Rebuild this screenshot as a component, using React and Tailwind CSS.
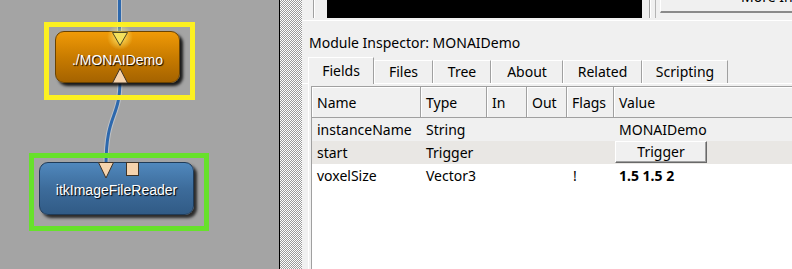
import React from "react";

function Canvas() {
  return (
    <div className="relative w-[279px] h-full shrink-0 bg-[#a4a4a4]">
      <svg className="absolute inset-0" width="279" height="269">
        <path d="M119.5 0 L119.5 36" stroke="#c9ced6" strokeOpacity="0.7" strokeWidth="5" fill="none" />
        <path d="M119.5 0 L119.5 36" stroke="#2d68ad" strokeWidth="3" fill="none" />
        <path d="M120 80 C120 120 106 112 106 166" stroke="#c9ced6" strokeOpacity="0.7" strokeWidth="5" fill="none" />
        <path d="M120 80 C120 120 106 112 106 166" stroke="#2d68ad" strokeWidth="3" fill="none" />
      </svg>

      <div className="absolute left-[44px] top-[22px] w-[151px] h-[78px] border-[5px] border-[#fcf021]" />
      <div className="absolute left-[55px] top-[31px] w-[125px] h-[52px] rounded-[9px] border border-[#6b4300] bg-linear-to-b from-[#f09a08] via-[#c97c00] to-[#a56300] shadow-[3px_3px_3px_rgba(0,0,0,0.85)] flex items-center justify-center pt-[6px] text-white font-['Liberation_Sans',Arial,sans-serif] text-[14px] [text-shadow:1px_1px_1px_#000]">
        ./MONAIDemo
      </div>

      <div className="absolute left-[29px] top-[153px] w-[180px] h-[78px] border-[5px] border-[#67e12b]" />
      <div className="absolute left-[39px] top-[162px] w-[155px] h-[53px] rounded-[9px] border border-[#1f3b58] bg-linear-to-b from-[#5088bd] via-[#3d6c9b] to-[#315b86] shadow-[3px_3px_3px_rgba(0,0,0,0.75)] flex items-center justify-center pt-[3px] text-white font-['Liberation_Sans',Arial,sans-serif] text-[14px] [text-shadow:1px_1px_1px_#000]">
        itkImageFileReader
      </div>

      <svg className="absolute inset-0" width="279" height="269">
        <defs>
          <radialGradient id="glow">
            <stop offset="0%" stopColor="#fff27a" stopOpacity="0.9" />
            <stop offset="100%" stopColor="#fff27a" stopOpacity="0" />
          </radialGradient>
        </defs>
        <circle cx="120" cy="37" r="13" fill="url(#glow)" />
        <polygon points="112.5,32.5 127.5,32.5 120,45.5" fill="#f3e15c" stroke="#4f4a22" strokeWidth="1" />
        <polygon points="112.5,83 127.5,83 120,68.5" fill="#f6d3ad" stroke="#3f3326" strokeWidth="1" />
        <polygon points="98.5,162.5 113.5,162.5 106,178" fill="#f6d3ad" stroke="#3f3326" strokeWidth="1" />
        <rect x="126.5" y="162.5" width="12" height="13" fill="#f6d3ad" stroke="#3f3326" strokeWidth="1" />
      </svg>
    </div>
  );
}

function Tab({ label, w, selected }) {
  if (selected) {
    return (
      <div
        className={`${w} h-[27px] -mb-px shrink-0 border-t border-l border-white border-r border-r-[#a0a0a0] bg-[#f0f0f0] flex justify-center pt-[3px] leading-[20px] relative z-10`}
      >
        {label}
      </div>
    );
  }
  return (
    <div
      className={`${w} h-[23px] shrink-0 border-t border-l border-white border-r border-r-[#a0a0a0] bg-[#f0f0f0] flex justify-center pt-[1px] leading-[20px]`}
    >
      {label}
    </div>
  );
}

function HeadCell({ children }) {
  return (
    <div className="h-[31px] border-r border-b border-[#a0a0a0] shadow-[inset_1px_1px_0_#ffffff] pl-[5px] pt-[6px] leading-[20px] bg-[#f0f0f0]">
      {children}
    </div>
  );
}

const cols = "grid grid-cols-[109px_66px_40px_40px_47px_1fr]";

function Row({ bg, cells }) {
  return (
    <div className={`${cols} h-[23px] ${bg}`}>
      {cells.map((c, i) => (
        <div key={i} className="pl-[5px] pt-[1px] leading-[22px] whitespace-nowrap overflow-visible">
          {c}
        </div>
      ))}
    </div>
  );
}

function Panel() {
  return (
    <div className="flex-1 min-w-0 h-full flex flex-col overflow-hidden bg-[#f0f0f0]">
      <div className="h-[20px] shrink-0 flex items-start">
        <div className="w-[11px] shrink-0" />
        <div className="w-px h-[18px] bg-[#a0a0a0] shrink-0" />
        <div className="w-px h-[18px] bg-white shrink-0" />
        <div className="w-[12px] shrink-0" />
        <div className="w-[315px] h-[18px] bg-black shrink-0" />
        <div className="w-[7px] shrink-0" />
        <div className="w-px h-[18px] bg-[#a0a0a0] shrink-0" />
        <div className="w-px h-[18px] bg-white shrink-0" />
        <div className="w-[4px] shrink-0" />
        <div className="w-px h-[18px] bg-[#b4b4b4] shrink-0" />
        <div className="w-[4px] shrink-0" />
        <div className="flex-1 h-[13px] border-l border-white border-b-2 border-b-[#8a8a8a] overflow-hidden">
          <div className="pl-[80px] -mt-[11px] leading-[16px] whitespace-nowrap">More Info</div>
        </div>
      </div>
      <div className="h-px bg-white shrink-0" />
      <div className="pt-[12px] pl-[7px] leading-[20px] shrink-0">Module Inspector: MONAIDemo</div>
      <div className="mt-[4px] h-[27px] shrink-0 flex items-end pl-[6px] border-b border-white">
        <Tab label="Fields" w="w-[66px]" selected />
        <Tab label="Files" w="w-[59px]" />
        <Tab label="Tree" w="w-[58px]" />
        <Tab label="About" w="w-[72px]" />
        <Tab label="Related" w="w-[79px]" />
        <Tab label="Scripting" w="w-[86px]" />
      </div>
      <div className="flex-1 ml-[6px] border-l border-white pl-[2px] pt-[2px] flex flex-col min-h-0">
        <div className="flex-1 bg-white border-t border-l border-[#a0a0a0]">
          <div className={cols}>
            <HeadCell>Name</HeadCell>
            <HeadCell>Type</HeadCell>
            <HeadCell>In</HeadCell>
            <HeadCell>Out</HeadCell>
            <HeadCell>Flags</HeadCell>
            <div className="h-[31px] border-b border-[#a0a0a0] shadow-[inset_1px_1px_0_#ffffff] pl-[5px] pt-[6px] leading-[20px] bg-[#f0f0f0]">
              Value
            </div>
          </div>
          <Row bg="bg-[#f0f0f0]" cells={["instanceName", "String", "", "", "", "MONAIDemo"]} />
          <div className={`${cols} h-[23px] bg-[#e9e7e4]`}>
            <div className="pl-[5px] pt-[1px] leading-[22px]">start</div>
            <div className="pl-[5px] pt-[1px] leading-[22px]">Trigger</div>
            <div />
            <div />
            <div />
            <div className="pl-px">
              <div className="w-[92px] h-[22px] bg-[#f0f0f0] border-t border-l border-white border-r border-b border-r-[#696969] border-b-[#696969] shadow-[inset_-1px_-1px_0_#a0a0a0] flex items-center justify-center leading-[20px]">
                Trigger
              </div>
            </div>
          </div>
          <Row
            bg="bg-white"
            cells={["voxelSize", "Vector3", "", "", <span className="pl-px">!</span>, <span className="font-bold">1.5 1.5 2</span>]}
          />
        </div>
      </div>
    </div>
  );
}

export default function App() {
  return (
    <div className="flex w-[792px] h-[269px] overflow-hidden bg-[#f0f0f0] font-['Noto_Sans',sans-serif] text-[14px] text-black">
      <Canvas />
      <div className="w-px h-full bg-black shrink-0" />
      <div className="w-[22px] h-full shrink-0 bg-[repeating-conic-gradient(#9a9a9a_0_25%,#ffffff_0_50%)] bg-size-[2px_2px]" />
      <Panel />
    </div>
  );
}
